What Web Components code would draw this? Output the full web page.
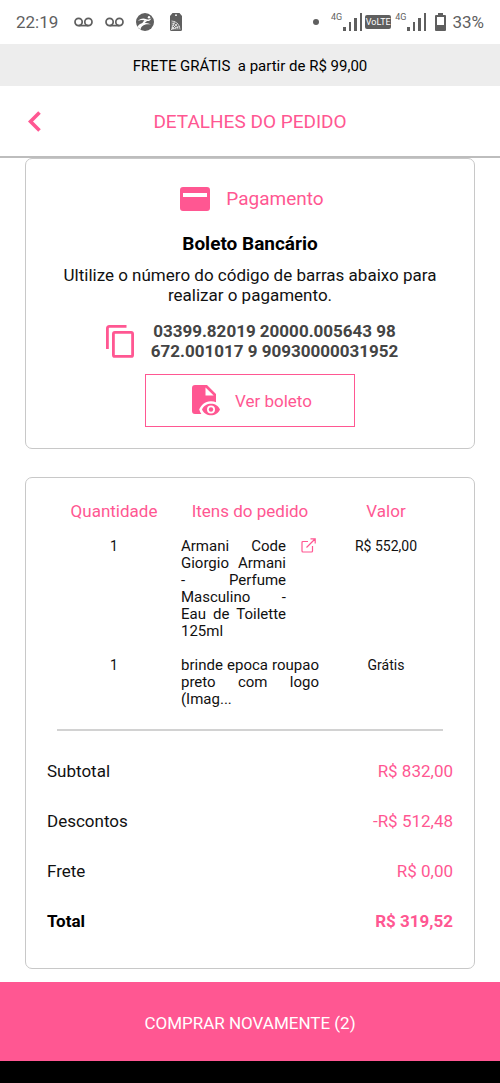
<!DOCTYPE html>
<html lang="pt-BR">
<head>
<meta charset="utf-8">
<meta name="viewport" content="width=device-width, initial-scale=1">
<title>Detalhes do pedido</title>
<style>
  :root { --pink: #ff5792; --line: #d2d2d2; --ink: #111; }
  body { margin: 0; min-height: 100vh; display: flex; flex-direction: column; background: #fff; color: var(--ink); font-family: Roboto, "Liberation Sans", sans-serif; }
  main { flex: 1; display: flex; flex-direction: column; gap: 28px; padding: 0 25px 13px; }
</style>
</head>
<body>
<status-bar time="22:19" battery="33%"></status-bar>
<promo-strip>FRETE GRÁTIS&nbsp; a partir de R$ 99,00</promo-strip>
<page-header>DETALHES DO PEDIDO</page-header>
<main>
  <info-card>
    <payment-panel>
      <span slot="method">Boleto Bancário</span>
      <span slot="hint">Ultilize o número do código de barras abaixo para realizar o pagamento.</span>
      <span slot="code">03399.82019 20000.005643 98<br>672.001017 9 90930000031952</span>
    </payment-panel>
  </info-card>
  <info-card>
    <order-items></order-items>
    <order-totals></order-totals>
  </info-card>
</main>
<buy-bar>COMPRAR NOVAMENTE (2)</buy-bar>

<script>
const define = (name, html, setup) => {
  const template = document.createElement('template');
  template.innerHTML = html;
  customElements.define(name, class extends HTMLElement {
    constructor() {
      super();
      this.attachShadow({ mode: 'open' }).append(template.content.cloneNode(true));
    }
    connectedCallback() { if (setup) setup(this, this.shadowRoot); }
  });
};

define('status-bar', `
  <style>
    :host { display: flex; justify-content: space-between; align-items: center; height: 44px; padding: 0 16px; color: #5f5f5f; font-size: 17px; }
    div { display: flex; align-items: center; }
    .left { gap: 12px; }
    #time, .app { margin-right: 4px; }
    svg { display: block; fill: currentColor; }
    .net { font-size: 9px; line-height: 10px; align-self: flex-start; }
    .volte { box-sizing: border-box; width: 26px; background: #5f5f5f; color: #fff; border-radius: 2px; font-size: 9px; line-height: 14px; text-align: center; margin: 0 4px 0 2px; }
    .dot { width: 6px; height: 6px; border-radius: 50%; background: #5f5f5f; margin-right: 12px; }
    .bat { margin: 0 6px 0 8px; }
  </style>
  <div class="left">
    <span id="time"></span>
    <svg width="19" height="10" viewBox="0 0 19 10"><path d="M4.600 8.600h9.800" fill="none" stroke="currentColor" stroke-width="1.700"/><circle cx="4.600" cy="5" r="3.600" fill="none" stroke="currentColor" stroke-width="1.700"/><circle cx="14.400" cy="5" r="3.600" fill="none" stroke="currentColor" stroke-width="1.700"/></svg>
    <svg width="19" height="10" viewBox="0 0 19 10"><path d="M4.600 8.600h9.800" fill="none" stroke="currentColor" stroke-width="1.700"/><circle cx="4.600" cy="5" r="3.600" fill="none" stroke="currentColor" stroke-width="1.700"/><circle cx="14.400" cy="5" r="3.600" fill="none" stroke="currentColor" stroke-width="1.700"/></svg>
    <svg class="app" width="18" height="18" viewBox="0 0 18 18"><circle cx="9" cy="9" r="9"/><g fill="#fff"><path d="M2 8C5 4.800 8 5.200 10.500 6.200 12.500 7 14 6.300 15.500 5 14.500 7.800 12.500 8.300 10.500 8 7.500 7 5 6.300 2 8z"/><path d="M1.500 14C3 10.200 8 8.500 15 11.500 9.500 10.800 5.500 12 4.500 16.500z"/><path d="M8.500 7L11 8l-3.500 3-2 .2z"/><circle cx="13" cy="4.300" r="1.200"/></g></svg>
    <svg width="12" height="18" viewBox="0 0 12 18"><path d="M2.500 0h7L12 3v13.500q0 1.500-1.500 1.500h-9Q0 18 0 16.500V3z"/><g fill="none" stroke="#fff" stroke-width=".7"><path d="M1.500 8a8.500 8.500 0 0 1 8.500 8.500M1.500 10a6.500 6.500 0 0 1 6.500 6.500M1.500 12a4.500 4.500 0 0 1 4.500 4.500M1.500 14a2.500 2.500 0 0 1 2.500 2.500M1.500 16.500L7.500 10.500M1.500 16.500L4.500 8.500M1.500 16.500L9.500 13.500"/></g><circle cx="6" cy="2.200" r=".9" fill="#fff"/></svg>
  </div>
  <div>
    <span class="dot"></span>
    <span class="net">4G</span>
    <svg width="21" height="18" viewBox="0 0 21 18"><path d="M1 14h3v4H1zM7 9h2v9H7zM12 5h3v13h-3zM18 0h2v18h-2z"/></svg>
    <span class="volte">VoLTE</span>
    <span class="net">4G</span>
    <svg width="21" height="18" viewBox="0 0 21 18"><path d="M1 14h3v4H1zM7 9h2v9H7zM12 5h3v13h-3zM18 0h2v18h-2z"/></svg>
    <svg class="bat" width="11" height="18" viewBox="0 0 11 18"><path fill-rule="evenodd" d="M3 0h5v2h2q1 0 1 1v14q0 1-1 1H1q-1 0-1-1V3q0-1 1-1h2zM2 4v8h7V4z"/></svg>
    <span id="battery"></span>
  </div>`,
  (host, root) => {
    root.getElementById('time').textContent = host.getAttribute('time');
    root.getElementById('battery').textContent = host.getAttribute('battery');
  });

define('promo-strip', `
  <style>:host { display: block; background: #ededed; padding-top: 2px; text-align: center; font-size: 15px; line-height: 40px; color: #000; }</style>
  <slot></slot>`);

define('page-header', `
  <style>
    :host { display: grid; grid-template-columns: 70px 1fr 70px; align-items: center; height: 70px; border-bottom: 2px solid #bdbdbd; color: var(--pink); }
    h1 { margin: 0; padding-top: 2px; font-size: 19px; line-height: 24px; font-weight: 400; text-align: center; }
    button { border: 0; background: none; padding: 0 0 0 28px; height: 44px; color: inherit; }
    svg { display: block; }
  </style>
  <button type="button" aria-label="Voltar"><svg width="13" height="21" viewBox="0 0 13 21"><path d="M11.500 1.500L2.500 10.500l9 9" fill="none" stroke="currentColor" stroke-width="3.600"/></svg></button>
  <h1><slot></slot></h1>`);

define('info-card', `
  <style>:host { display: block; border: 1px solid #c8c8c8; border-radius: 7px; padding: 0 21px; }</style>
  <slot></slot>`);

define('payment-panel', `
  <style>
    :host { display: flex; flex-direction: column; align-items: center; padding: 27px 16px 21px; text-align: center; }
    h2, h3, p { margin: 0; }
    svg { display: block; flex: none; }
    h2 { display: flex; align-items: center; gap: 16px; padding-left: 4px; color: var(--pink); font-size: 19px; line-height: 26px; font-weight: 400; }
    h3 { margin-top: 19px; font-size: 19px; line-height: 26px; font-weight: 700; color: #000; }
    p { margin-top: 8px; font-size: 17px; line-height: 20px; }
    .code { display: flex; align-items: center; gap: 17px; margin-top: 16px; padding-left: 4px; color: #444; font-size: 17px; line-height: 20px; font-weight: 700; }
    button { font: inherit; background: none; border: 0; padding: 0; color: var(--pink); }
    .view { display: flex; align-items: center; justify-content: center; gap: 15px; box-sizing: border-box; width: 210px; height: 53px; margin-top: 13px; padding-left: 4px; border: 1px solid var(--pink); font-size: 17px; }
  </style>
  <h2><svg width="30" height="24" viewBox="0 0 30 24"><path fill="currentColor" fill-rule="evenodd" d="M3 0h24q3 0 3 3v18q0 3-3 3H3q-3 0-3-3V3q0-3 3-3zM3 6v4h24V6z"/></svg>Pagamento</h2>
  <h3><slot name="method"></slot></h3>
  <p><slot name="hint"></slot></p>
  <div class="code">
    <button type="button" aria-label="Copiar código"><svg width="28" height="33" viewBox="0 0 28 33"><g fill="none" stroke="currentColor" stroke-width="2.800"><path d="M1.400 24V3.400q0-2 2-2H20.500"/><rect x="7.400" y="7.400" width="19.200" height="24" rx="1.500"/></g></svg></button>
    <span><slot name="code"></slot></span>
  </div>
  <button type="button" class="view"><svg width="28" height="31" viewBox="0 0 28 31"><path fill="currentColor" fill-rule="evenodd" d="M3 0h12l9 9v8.200Q21.500 16 18.500 16.200C13 16.500 9 20 7.200 24.500q.8 2.600 2.200 4.500H3q-3 0-3-3V3q0-3 3-3zM13.500 2.500V10.500h8.200z"/><path fill="currentColor" fill-rule="evenodd" d="M10 24.500C13 16.800 25 16.800 28 24.500 25 32.200 13 32.200 10 24.500zM19 20.500a4 4 0 1 0 0 8 4 4 0 1 0 0-8z"/><circle cx="19" cy="24.500" r="2.200" fill="currentColor"/></svg>Ver boleto</button>`);

define('order-items', `
  <style>
    :host { display: block; padding: 16px 0 15px; }
    table { width: 100%; table-layout: fixed; border-collapse: collapse; font-size: 14px; line-height: 17px; }
    .wide { width: 34%; }
    th { padding: 7px 0 8px; color: var(--pink); font-size: 17px; line-height: 20px; font-weight: 400; }
    td { padding: 9px 0 8px; vertical-align: top; text-align: center; }
    .item { display: flex; font-size: 15px; text-align: justify; }
    .item span { flex: 1; }
    a { flex: none; width: 33px; color: var(--pink); }
    svg { display: block; margin: 0 auto 0 15px; }
    hr { margin: 13px 10px 0; border: 0; border-top: 2px solid var(--line); }
  </style>
  <table>
    <colgroup><col><col class="wide"><col></colgroup>
    <thead><tr><th scope="col">Quantidade</th><th scope="col">Itens do pedido</th><th scope="col">Valor</th></tr></thead>
    <tbody>
      <tr><td>1</td><td><div class="item"><span>Armani Code Giorgio Armani - Perfume Masculino - Eau de Toilette 125ml</span><a href="#produto" aria-label="Abrir produto"><svg width="15" height="15" viewBox="0 0 15 15" fill="none" stroke="currentColor" stroke-width="1.200"><path d="M7 3.500H2q-1 0-1 1V13q0 1 1 1h8.500q1 0 1-1V8M5.500 9.500L14 1M9.500 .8H14.200V5.500"/></svg></a></div></td><td>R$ 552,00</td></tr>
      <tr><td>1</td><td><div class="item"><span>brinde epoca roupao preto com logo (Imag...</span></div></td><td>Grátis</td></tr>
    </tbody>
  </table>
  <hr>`);

define('order-totals', `
  <style>
    :host { display: block; padding-bottom: 22px; }
    dl { margin: 0; font-size: 17px; }
    div { display: flex; justify-content: space-between; line-height: 50px; }
    dd { margin: 0; color: var(--pink); }
    .total { font-weight: 700; }
    .total dt { color: #000; }
  </style>
  <dl>
    <div><dt>Subtotal</dt><dd>R$ 832,00</dd></div>
    <div><dt>Descontos</dt><dd>-R$ 512,48</dd></div>
    <div><dt>Frete</dt><dd>R$ 0,00</dd></div>
    <div class="total"><dt>Total</dt><dd>R$ 319,52</dd></div>
  </dl>`);

define('buy-bar', `
  <style>
    :host { display: block; border-bottom: 22px solid #000; }
    button { display: block; width: 100%; height: 79px; padding: 2px 0 0; border: 0; background: var(--pink); color: #fff; font: inherit; font-size: 17px; }
  </style>
  <button type="button"><slot></slot></button>`);
</script>
</body>
</html>
